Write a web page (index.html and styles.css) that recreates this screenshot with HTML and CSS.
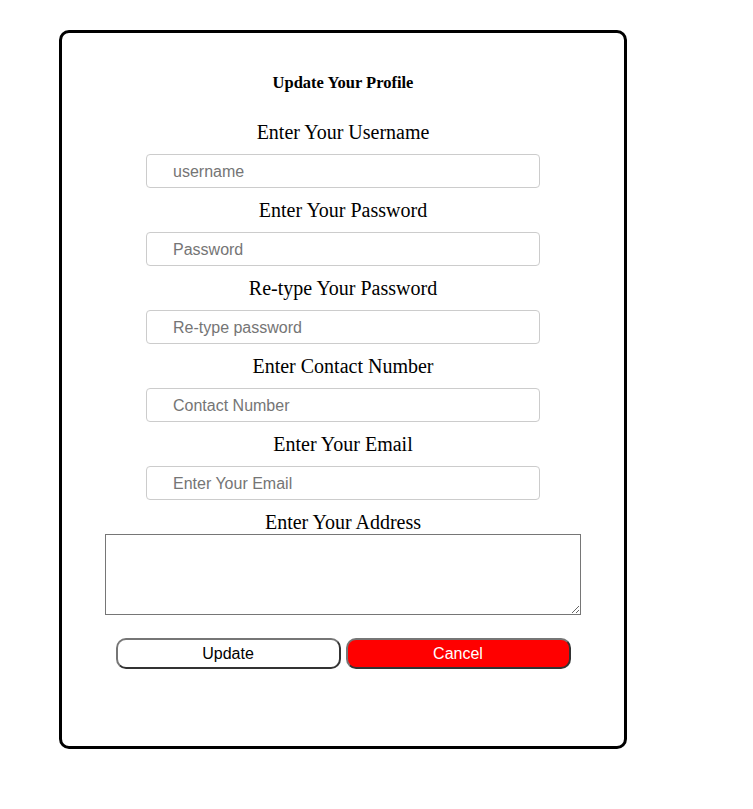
FILE: index.html
```html
<!DOCTYPE html>
<html>
<head>
<meta charset="utf-8">
<link rel="stylesheet" href="styles.css">
</head>
<body>
<div class="card">
  <div class="title">Update Your Profile</div>
  <div class="label">Enter Your Username</div>
  <input class="field" type="text" placeholder="username">
  <div class="label">Enter Your Password</div>
  <input class="field" type="password" placeholder="Password">
  <div class="label">Re-type Your Password</div>
  <input class="field" type="password" placeholder="Re-type password">
  <div class="label">Enter Contact Number</div>
  <input class="field" type="text" placeholder="Contact Number">
  <div class="label">Enter Your Email</div>
  <input class="field" type="text" placeholder="Enter Your Email">
  <div class="label label-last">Enter Your Address</div>
  <textarea class="area"></textarea>
  <div class="buttons">
    <button class="btn btn-update">Update</button>
    <button class="btn btn-cancel">Cancel</button>
  </div>
</div>
</body>
</html>
```
FILE: styles.css
```css
body {
  margin: 8px;
  background: #fff;
  font-family: "Liberation Serif", "Times New Roman", serif;
}
.card {
  box-sizing: border-box;
  width: 568px;
  height: 719px;
  margin: 22px 0 0 51px;
  border: 3px solid #000;
  border-radius: 10px;
  display: flex;
  flex-direction: column;
  align-items: center;
  padding-top: 40px;
}
.title {
  font-weight: bold;
  font-size: 16.5px;
  line-height: 20px;
  margin-bottom: 28px;
}
.label {
  font-size: 20px;
  line-height: 22px;
  color: #000;
}
.field {
  box-sizing: border-box;
  width: 394px;
  height: 34px;
  margin: 11px 0;
  padding: 2px 0 0 26px;
  border: 1px solid #ccc;
  border-radius: 4px;
  font-family: "Liberation Sans", Arial, sans-serif;
  font-size: 16px;
  color: #000;
  outline: none;
}
.field::placeholder {
  color: #757575;
}
.label-last {
  margin-bottom: 1px;
}
.area {
  box-sizing: border-box;
  width: 476px;
  height: 81px;
  margin: 0;
  border: 1px solid #767676;
  border-radius: 0;
  padding: 2px;
}
.buttons {
  display: flex;
  gap: 5px;
  margin-top: 23px;
}
.btn {
  box-sizing: border-box;
  width: 225px;
  height: 31px;
  border: 2px solid;
  border-color: #767676 #333 #333 #767676;
  border-radius: 10px;
  font-family: "Liberation Sans", Arial, sans-serif;
  font-size: 16px;
  padding: 0;
}
.btn-update {
  background: #fff;
  color: #000;
}
.btn-cancel {
  background: #ff0000;
  color: #fff;
}
```
